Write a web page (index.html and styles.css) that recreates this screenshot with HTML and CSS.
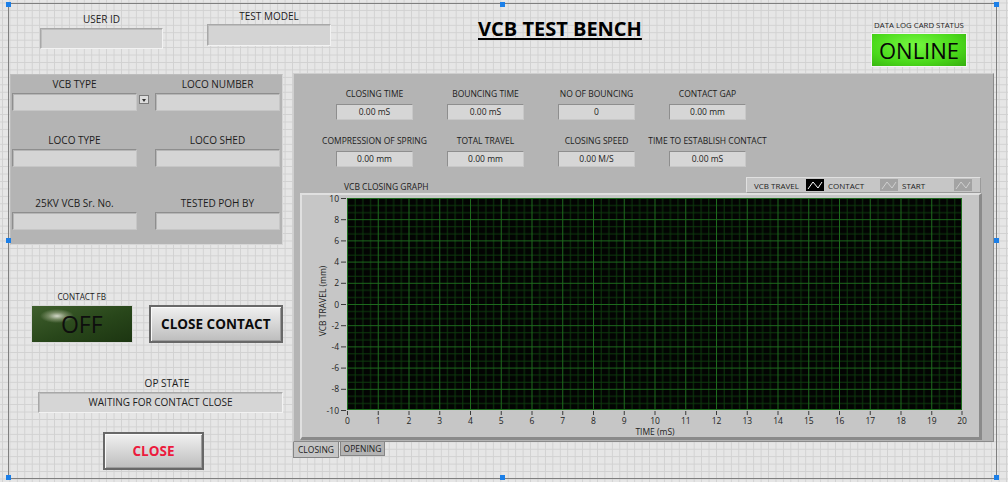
FILE: index.html
```html
<!DOCTYPE html>
<html lang="en">
<head>
    <meta charset="UTF-8">
    <title>VCB Test Bench</title>
    <link rel="stylesheet" href="styles.css">
</head>
<body>
<div class="frame">
    <!-- selection handles -->
    <span class="handle h-tl"></span>
    <span class="handle h-tm"></span>
    <span class="handle h-tr"></span>
    <span class="handle h-ml"></span>
    <span class="handle h-mr"></span>
    <span class="handle h-bl"></span>
    <span class="handle h-bm"></span>
    <span class="handle h-br"></span>

    <div class="top">
        <div class="user-id">
            <div class="lbl">USER ID</div>
            <div class="str"></div>
        </div>
        <div class="test-model">
            <div class="lbl">TEST MODEL</div>
            <div class="str"></div>
        </div>
        <h1 class="title">VCB TEST BENCH</h1>
        <div class="status">
            <div class="lbl">DATA LOG CARD STATUS</div>
            <div class="online">ONLINE</div>
        </div>
    </div>

    <div class="main">
        <div class="left">
            <div class="cluster">
                <div class="row">
                    <div class="field">
                        <div class="lbl">VCB TYPE</div>
                        <div class="combo"><div class="str in"></div><span class="drop"></span></div>
                    </div>
                    <div class="field">
                        <div class="lbl">LOCO NUMBER</div>
                        <div class="str in"></div>
                    </div>
                </div>
                <div class="row r2">
                    <div class="field">
                        <div class="lbl">LOCO TYPE</div>
                        <div class="str in"></div>
                    </div>
                    <div class="field">
                        <div class="lbl">LOCO SHED</div>
                        <div class="str in"></div>
                    </div>
                </div>
                <div class="row r3">
                    <div class="field">
                        <div class="lbl">25KV VCB Sr. No.</div>
                        <div class="str in"></div>
                    </div>
                    <div class="field">
                        <div class="lbl">TESTED POH BY</div>
                        <div class="str in"></div>
                    </div>
                </div>
            </div>

            <div class="contact">
                <div class="led-wrap">
                    <div class="lbl">CONTACT FB</div>
                    <div class="led">OFF</div>
                </div>
                <button class="btn btn-contact">CLOSE CONTACT</button>
            </div>

            <div class="op">
                <div class="lbl">OP STATE</div>
                <div class="str op-val">WAITING FOR CONTACT CLOSE</div>
            </div>

            <button class="btn btn-close">CLOSE</button>
        </div>

        <div class="tabs">
            <div class="page">
                <div class="inds">
                    <div class="ind"><div class="lbl">CLOSING TIME</div><div class="val">0.00 mS</div></div>
                    <div class="ind"><div class="lbl">BOUNCING TIME</div><div class="val">0.00 mS</div></div>
                    <div class="ind"><div class="lbl">NO OF BOUNCING</div><div class="val">0</div></div>
                    <div class="ind"><div class="lbl">CONTACT GAP</div><div class="val">0.00 mm</div></div>
                    <div class="ind"><div class="lbl">COMPRESSION OF SPRING</div><div class="val">0.00 mm</div></div>
                    <div class="ind"><div class="lbl">TOTAL TRAVEL</div><div class="val">0.00 mm</div></div>
                    <div class="ind"><div class="lbl">CLOSING SPEED</div><div class="val">0.00 M/S</div></div>
                    <div class="ind"><div class="lbl">TIME TO ESTABLISH CONTACT</div><div class="val">0.00 mS</div></div>
                </div>

                <div class="graph-head">
                    <div class="graph-title">VCB CLOSING GRAPH</div>
                    <div class="legend">
                        <div class="entry">VCB TRAVEL
                            <svg class="ico" width="18" height="12"><rect width="18" height="12" fill="#000"/><polyline points="2,10 7,3 12,9 16,3" fill="none" stroke="#fff"/></svg>
                        </div>
                        <div class="entry">CONTACT
                            <svg class="ico" width="18" height="12"><rect width="18" height="12" fill="#a3a3a3"/><polyline points="2,10 7,3 12,9 16,3" fill="none" stroke="#d0d0d0"/></svg>
                        </div>
                        <div class="entry">START
                            <svg class="ico" width="18" height="12"><rect width="18" height="12" fill="#a3a3a3"/><polyline points="2,10 7,3 12,9 16,3" fill="none" stroke="#d0d0d0"/></svg>
                        </div>
                    </div>
                </div>

                <div class="graph">
                    <svg class="plot" width="677" height="242" viewBox="0 0 677 242">
                        <defs>
                            <pattern id="grid" x="45" y="3" width="30.75" height="21.2" patternUnits="userSpaceOnUse">
                                <path d="M8.19 0V21.2M15.88 0V21.2M23.56 0V21.2M0 7.57H30.75M0 14.63H30.75" stroke="#0d3a0d"/>
                                <path d="M0.5 0V21.2M0 0.5H30.75" stroke="#1d6b1d"/>
                            </pattern>
                        </defs>
                        <rect x="45" y="3" width="615" height="212" fill="#030403"/>
                        <rect x="45" y="3" width="615" height="212" fill="url(#grid)"/>
                        <path d="M659.5 3V215M45 214.5H660" stroke="#1d6b1d"/>

                        <!-- y ticks -->
                        <path d="M39 3.5h5M39 24.7h5M39 45.9h5M39 67.1h5M39 88.3h5M39 109.5h5M39 130.7h5M39 151.9h5M39 173.1h5M39 194.3h5M39 215.5h5" stroke="#3a3a3a"/>
                        <!-- x ticks -->
                        <path d="M45.5 216v4M76.25 216v4M107 216v4M137.75 216v4M168.5 216v4M199.25 216v4M230 216v4M260.75 216v4M291.5 216v4M322.25 216v4M353 216v4M383.75 216v4M414.5 216v4M445.25 216v4M476 216v4M506.75 216v4M537.5 216v4M568.25 216v4M599 216v4M629.75 216v4M660 216v4" stroke="#3a3a3a"/>

                        <g text-anchor="end">
                            <text x="37" y="6.5">10</text>
                            <text x="37" y="27.7">8</text>
                            <text x="37" y="48.9">6</text>
                            <text x="37" y="70.1">4</text>
                            <text x="37" y="91.3">2</text>
                            <text x="37" y="112.5">0</text>
                            <text x="37" y="133.7">-2</text>
                            <text x="37" y="154.9">-4</text>
                            <text x="37" y="176.1">-6</text>
                            <text x="37" y="197.3">-8</text>
                            <text x="37" y="218.5">-10</text>
                        </g>
                        <g text-anchor="middle">
                            <text x="45.5" y="229">0</text>
                            <text x="76.25" y="229">1</text>
                            <text x="107" y="229">2</text>
                            <text x="137.75" y="229">3</text>
                            <text x="168.5" y="229">4</text>
                            <text x="199.25" y="229">5</text>
                            <text x="230" y="229">6</text>
                            <text x="260.75" y="229">7</text>
                            <text x="291.5" y="229">8</text>
                            <text x="322.25" y="229">9</text>
                            <text x="353" y="229">10</text>
                            <text x="383.75" y="229">11</text>
                            <text x="414.5" y="229">12</text>
                            <text x="445.25" y="229">13</text>
                            <text x="476" y="229">14</text>
                            <text x="506.75" y="229">15</text>
                            <text x="537.5" y="229">16</text>
                            <text x="568.25" y="229">17</text>
                            <text x="599" y="229">18</text>
                            <text x="629.75" y="229">19</text>
                            <text x="660" y="229">20</text>
                            <text x="353" y="239.5">TIME (mS)</text>
                            <text transform="translate(24 106) rotate(-90)">VCB TRAVEL (mm)</text>
                        </g>
                    </svg>
                </div>
            </div>
            <div class="tab-row">
                <span class="tab on">CLOSING</span>
                <span class="tab">OPENING</span>
            </div>
        </div>
    </div>
</div>
</body>
</html>
```

FILE: styles.css
```css
/* LabVIEW style front panel */
body {
    margin: 0;
    padding: 3px 0 0 8px;
    height: 482px;
    box-sizing: border-box;
    overflow: hidden;
    font-family: "Open Sans", "Noto Sans", sans-serif;
    color: #1c1c1c;
    background-color: #e6e6e6;
    background-image:
        linear-gradient(to right, #d1d1d1 1px, transparent 1px),
        linear-gradient(to bottom, #d1d1d1 1px, transparent 1px);
    background-size: 7.44px 7.44px;
    background-position: 2px 2.5px;
}

.frame {
    position: relative;
    width: 989px;
    height: 476px;
    box-sizing: border-box;
    border: 1px solid #7f7f7f;
}

.handle {
    position: absolute;
    width: 5px;
    height: 5px;
    background: #1b7fe8;
}
.h-tl { left: -3px; top: -2px; }
.h-tm { left: 491px; top: -2px; }
.h-tr { left: 985px; top: -2px; }
.h-ml { left: -3px; top: 234px; }
.h-mr { left: 985px; top: 234px; }
.h-bl { left: -3px; top: 471px; }
.h-bm { left: 491px; top: 471px; }
.h-br { left: 985px; top: 471px; }

.lbl {
    font-size: 10px;
    line-height: 12px;
    text-align: center;
    white-space: nowrap;
}

/* string controls */
.str {
    box-sizing: border-box;
    background: #d4d4d4;
    border: 1px solid;
    border-color: #a8a8a8 #f2f2f2 #f2f2f2 #a8a8a8;
    box-shadow: inset 1px 1px 0 #bdbdbd;
}

/* header */
.top {
    display: flex;
    align-items: flex-start;
    height: 69px;
}

.user-id {
    margin: 9px 0 0 31px;
    width: 123px;
}
.user-id .str {
    height: 21px;
    margin-top: 3px;
}

.test-model {
    margin: 6px 0 0 44px;
    width: 124px;
}
.test-model .str {
    height: 22px;
    margin-top: 2px;
}

.title {
    margin: 13px 0 0 147px;
    font-size: 20px;
    line-height: 24px;
    font-weight: 700;
    color: #000;
    white-space: nowrap;
    text-decoration: underline;
    text-decoration-thickness: 2px;
    text-underline-offset: 2px;
}

.status {
    margin: 16px 29px 0 auto;
    width: 96px;
}
.status .lbl {
    font-size: 7.8px;
    line-height: 10px;
}
.online {
    margin-top: 3px;
    height: 34px;
    box-sizing: border-box;
    border: 1px solid #f4f4f4;
    background: radial-gradient(ellipse at 45% 35%, #74f840, #4ad81a 60%, #35ae0e);
    font-size: 22px;
    line-height: 32px;
    text-align: center;
    color: #060606;
}

/* main area */
.main {
    display: flex;
    align-items: flex-start;
}

.left {
    margin-left: 1px;
    width: 273px;
}

.cluster {
    margin-top: 1px;
    height: 171px;
    box-sizing: border-box;
    padding: 3px 0 0 1px;
    background: #b4b4b4;
    border: 1px solid;
    border-color: #bdbdbd #d6d6d6 #d6d6d6 #bdbdbd;
}

.row {
    display: grid;
    grid-template-columns: 143px 125px;
}
.r2 { margin-top: 23px; }
.r3 { margin-top: 30px; }

.field .lbl { width: 125px; }

.str.in {
    width: 125px;
    height: 18px;
    margin-top: 3px;
    background: #d5d5d5;
    border-color: #8e8e8e #c6c6c6 #c6c6c6 #8e8e8e;
    box-shadow: inset 1px 1px 0 #b6b6b6;
}

.combo {
    display: flex;
    align-items: flex-start;
    gap: 2px;
}
.combo .str.in { flex: 0 0 125px; }

.drop {
    position: relative;
    margin-top: 5px;
    width: 10px;
    height: 9px;
    box-sizing: border-box;
    border: 1px solid #7a7a7a;
    background: #dcdcdc;
}
.drop::after {
    content: "";
    position: absolute;
    left: 2px;
    top: 3px;
    border-left: 2px solid transparent;
    border-right: 2px solid transparent;
    border-top: 3px solid #333;
}

.contact {
    display: flex;
    align-items: flex-end;
    margin-top: 46px;
}

.led-wrap {
    margin-left: 21px;
    width: 102px;
}
.led-wrap .lbl { font-size: 8.2px; }

.led {
    margin-top: 2px;
    height: 38px;
    box-sizing: border-box;
    border: 1px solid #d9d9d9;
    background:
        radial-gradient(ellipse 17px 7px at 25px 10px, rgba(218, 222, 208, 0.95), rgba(160, 172, 140, 0.6) 50%, transparent),
        linear-gradient(160deg, #3f5f2d, #28461a 55%, #1c3511);
    font-size: 23px;
    line-height: 36px;
    text-align: center;
    color: #0e0e0e;
}

.btn {
    padding: 0;
    box-sizing: border-box;
    font-family: inherit;
    font-size: 13.5px;
    font-weight: 700;
    color: #0b0b0b;
    border: 2px solid #686868;
    background: linear-gradient(#f0f0f0, #d4d4d4 55%, #bdbdbd);
    box-shadow: inset 1px 1px 0 #fafafa, inset -1px -1px 0 #9c9c9c;
}

.btn-contact {
    margin-left: 16px;
    width: 135px;
    height: 38px;
}

.op {
    margin: 34px 0 0 28px;
    width: 245px;
}
.op .lbl { padding-left: 13px; }
.op-val {
    margin-top: 3px;
    height: 21px;
    font-size: 10px;
    line-height: 19px;
    text-align: center;
    background: #d6d6d6;
}

.btn-close {
    display: block;
    margin: 19px 0 0 93px;
    width: 101px;
    height: 38px;
    color: #ec1a3d;
}

/* tab control */
.tabs {
    margin-left: 10px;
    width: 701px;
}

.page {
    box-sizing: border-box;
    padding: 14px 11px 1px 6px;
    background: #b4b4b4;
    border: 1px solid;
    border-color: #cfcfcf #8a8a8a #8a8a8a #cfcfcf;
}

.inds {
    display: grid;
    grid-template-columns: repeat(4, 111px);
    row-gap: 15px;
    margin-left: 19px;
}

.ind {
    display: flex;
    flex-direction: column;
    align-items: center;
}
.ind .lbl { font-size: 8.5px; }

.val {
    margin-top: 4px;
    width: 77px;
    height: 16px;
    box-sizing: border-box;
    font-size: 8.5px;
    line-height: 14px;
    text-align: center;
    background: #d6d6d6;
    border: 1px solid;
    border-color: #8e8e8e #c8c8c8 #c8c8c8 #8e8e8e;
}

.graph-head {
    display: flex;
    justify-content: space-between;
    align-items: flex-end;
    margin-top: 10px;
    height: 16px;
}

.graph-title {
    margin-left: 44px;
    font-size: 8.5px;
    line-height: 12px;
}

.legend {
    display: flex;
    align-items: center;
    margin-right: 1px;
    padding: 0 8px 0 3px;
    height: 16px;
    box-sizing: border-box;
    background: #c6c6c6;
    border: 1px solid;
    border-color: #e0e0e0 #9a9a9a #9a9a9a #e0e0e0;
}

.entry {
    display: flex;
    align-items: center;
    justify-content: space-between;
    width: 74px;
    padding-left: 4px;
    box-sizing: border-box;
    font-size: 8px;
    white-space: nowrap;
}
.ico { display: block; }

.graph {
    height: 247px;
    box-sizing: border-box;
    border-style: solid;
    border-width: 2px 3px 3px 2px;
    border-color: #e0e0e0 #8a8a8a #8a8a8a #e0e0e0;
    background: #c6c6c6;
}

.plot {
    display: block;
    overflow: visible;
}
.plot text {
    font-family: "Open Sans", "Noto Sans", sans-serif;
    font-size: 8.5px;
    fill: #1e1e1e;
}

.tab-row {
    display: flex;
    gap: 1px;
    align-items: flex-start;
}

.tab {
    height: 14px;
    box-sizing: border-box;
    width: 45px;
    font-size: 8.5px;
    line-height: 13px;
    text-align: center;
    background: #b3b3b3;
    border: 1px solid #858585;
    border-top: none;
}
.tab.on {
    width: 46px;
    height: 16px;
    line-height: 15px;
    background: #c6c6c6;
}
```
